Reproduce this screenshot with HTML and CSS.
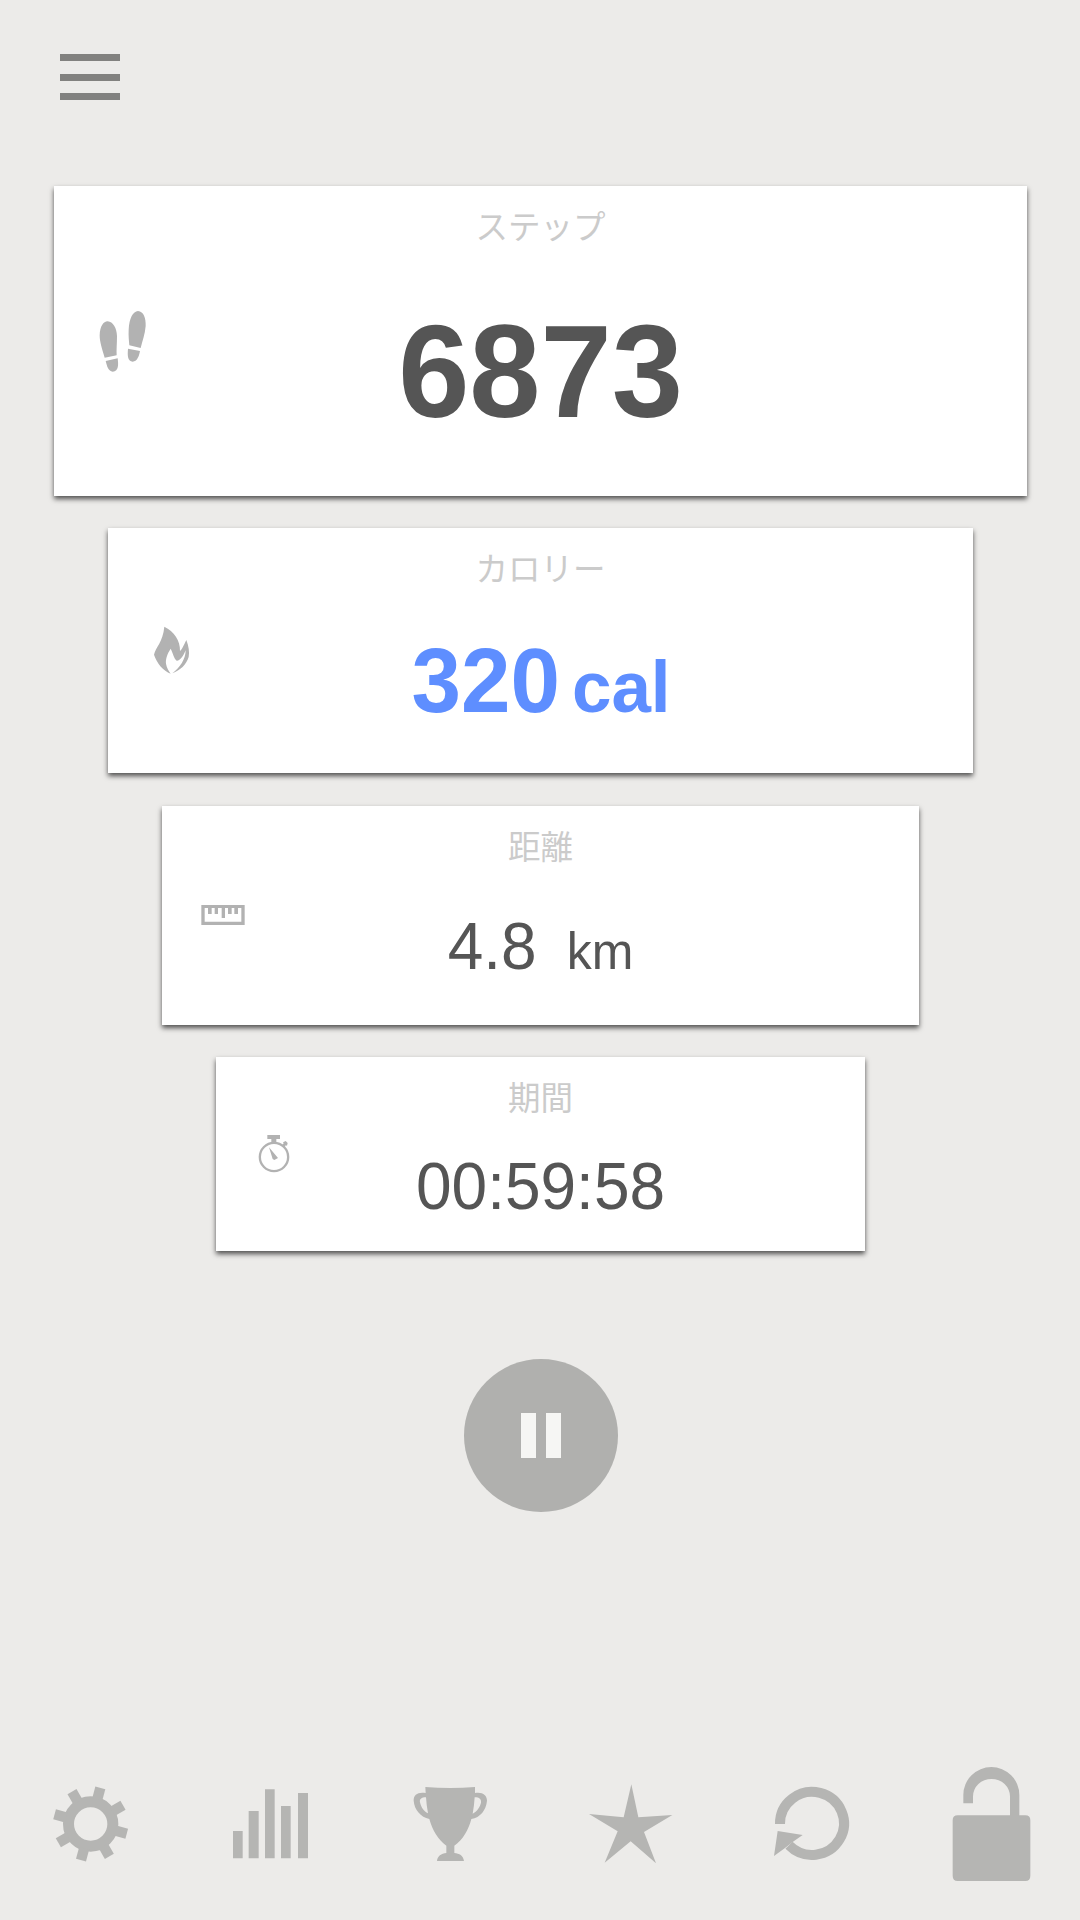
FILE: index.html
```html
<!DOCTYPE html>
<html lang="ja">
<head>
<meta charset="utf-8">
<title>ステップ</title>
<link rel="stylesheet" href="styles.css">
</head>
<body>
<div class="app">
  <header class="topbar">
    <div class="menu"><span class="menu-line"></span><span class="menu-line"></span><span class="menu-line"></span></div>
  </header>
  <main class="cards">
    <section class="card card-steps">
      <svg class="icon" width="60" height="70" viewBox="160 50 180 210">
        <path d="M195 202C187 175 180 155 180 135C181 108 191 93 204 93C220 94 231 113 232 137C232 160 230 178 231 195Z"/>
        <path d="M198 212L234 204C236 222 238 243 219 244C206 243 202 228 198 212Z"/>
        <path d="M269 165C268 150 266 138 267 118C269 83 280 63 295 62C312 63 319 84 318 107C316 132 308 152 303 173Z"/>
        <path d="M265 175L301 182C298 199 292 213 279 214C264 212 263 197 265 175Z"/>
      </svg>
      <h2 class="label">ステップ</h2>
      <p class="value"><span>6873</span></p>
    </section>
    <section class="card card-calories">
      <svg class="icon" width="50" height="60" viewBox="60 60 150 180">
        <path d="M103 80C132 94 151 122 150 153C157 148 162 134 169 120C176 139 179 156 176 171C169 194 151 211 127 220C150 203 167 177 167 151C160 169 150 183 140 182C132 176 129 160 122 146C112 161 106 178 108 191C110 204 117 214 122 221C100 213 80 189 72 164C76 143 99 126 103 80Z"/>
      </svg>
      <h2 class="label">カロリー</h2>
      <p class="value"><span>320</span><span class="unit">cal</span></p>
    </section>
    <section class="card card-distance">
      <svg class="icon" width="50" height="30" viewBox="144 60 150 90">
        <path fill-rule="evenodd" d="M154 75H284V135H154ZM164 84V125H274V84H264V102H253V84H245V102H234V84H225V114H215V84H204V102H194V84H185V102H174V84Z"/>
      </svg>
      <h2 class="label">距離</h2>
      <p class="value"><span>4.8</span><span class="unit">km</span></p>
    </section>
    <section class="card card-time">
      <svg class="icon" width="40" height="50" viewBox="162 90 120 150">
        <circle class="ring" cx="222" cy="171" r="42.5"/>
        <path d="M202 105H240V117H229V127H214V117H202ZM207 142L234 174L223 180L218 177ZM245 137L251 130L249 127L257 123L263 129L261 137L257 136L253 144Z"/>
      </svg>
      <h2 class="label">期間</h2>
      <p class="value"><span>00:59:58</span></p>
    </section>
  </main>
  <div class="controls">
    <button class="pause" aria-label="一時停止"><span class="pause-bar"></span><span class="pause-bar"></span></button>
  </div>
  <nav class="tabs">
    <svg class="tab" viewBox="-90 0 540 450">
      <circle class="gear-ring" cx="182" cy="222" r="66.5"/>
      <g transform="translate(182 222)">
        <rect x="-15.5" y="-112" width="31" height="36" transform="rotate(15)"/>
        <rect x="-15.5" y="-112" width="31" height="36" transform="rotate(60)"/>
        <rect x="-15.5" y="-112" width="31" height="36" transform="rotate(105)"/>
        <rect x="-15.5" y="-112" width="31" height="36" transform="rotate(150)"/>
        <rect x="-15.5" y="-112" width="31" height="36" transform="rotate(195)"/>
        <rect x="-15.5" y="-112" width="31" height="36" transform="rotate(240)"/>
        <rect x="-15.5" y="-112" width="31" height="36" transform="rotate(285)"/>
        <rect x="-15.5" y="-112" width="31" height="36" transform="rotate(330)"/>
      </g>
    </svg>
    <svg class="tab" viewBox="450 0 540 450">
      <path d="M609 243H638V325H609ZM656 183H686V325H656ZM705 118H734V325H705ZM753 168H782V325H753ZM804 129H834V325H804Z"/>
    </svg>
    <svg class="tab" viewBox="-60 0 540 450">
      <path fill-rule="evenodd" d="M136 111Q211 117 285 111L285 129C307 125 321 135 321 152C318 181 301 202 274 207C266 238 249 270 223 287V309C238 310 250 317 252 333H171C172 319 184 310 199 309V287C174 269 157 240 148 207C122 201 103 179 101 152C100 133 115 125 137 129ZM138 142C124 142 118 148 120 157C123 172 132 184 144 190C141 174 139 158 138 142ZM284 142C283 158 281 175 278 191C291 184 300 171 303 158C304 148 299 142 284 142Z"/>
    </svg>
    <svg class="tab" viewBox="480 0 540 450">
      <path d="M754 103L775 202L877 195L792 246L828 340L752 274L674 338L713 244L627 192L731 202Z"/>
    </svg>
    <svg class="tab" viewBox="-60 0 540 450">
      <path class="reload-arc" d="M120 222A96 94.500 0 1 1 147 286"/>
      <path d="M113 243L188 255L158 276L134 295L102 318Z"/>
    </svg>
    <svg class="tab" viewBox="480 0 540 450">
      <path d="M670 160V135A84 84 0 0 1 838 135V196H856Q871 196 871 211V377Q871 393 856 393H653Q638 393 638 377V211Q638 196 653 196H810V139A55.500 52 0 0 0 699 139V160Z"/>
    </svg>
  </nav>
</div>
</body>
</html>
```
FILE: styles.css
```css
* {
  box-sizing: border-box;
}

body {
  margin: 0;
  background: #ecebe9;
  font-family: "Liberation Sans", "Noto Sans CJK JP", sans-serif;
  color: #555;
}

.app {
  display: flex;
  flex-direction: column;
  width: 1080px;
  height: 1920px;
}

.topbar {
  height: 186px;
  padding: 54px 60px 0;
}

.menu {
  display: flex;
  flex-direction: column;
  justify-content: space-between;
  width: 60px;
  height: 46px;
}

.menu-line {
  height: 7px;
  background: #81817f;
}

.cards {
  display: flex;
  flex-direction: column;
  align-items: center;
  gap: 32px;
}

.card {
  display: grid;
  grid-template-rows: 80px 1fr;
  justify-items: center;
  background: #fff;
  box-shadow: 0 3px 5px rgba(0, 0, 0, 0.66);
}

.icon {
  grid-area: 1 / 1 / 3 / 2;
  justify-self: start;
  fill: #b2b2b2;
}

.label {
  grid-area: 1 / 1;
  margin: 0;
  padding: 21px 0 0 1px;
  font-family: "Noto Sans CJK JP", sans-serif;
  font-size: 32.500px;
  font-weight: 400;
  line-height: 36px;
  color: #cbcbcb;
}

.value {
  grid-area: 2 / 1;
  display: flex;
  align-items: baseline;
  margin: 0;
  padding-left: 1px;
  line-height: 1;
  transform: scaleY(1.03);
}

.card-steps {
  width: 973px;
  height: 310px;
}

.card-steps .icon {
  margin: 121px 0 0 39px;
}

.card-steps .value {
  margin-top: 43px;
  font-size: 128px;
  font-weight: bold;
}

.card-calories {
  width: 865px;
  height: 245px;
}

.card-calories .icon {
  margin: 92px 0 0 42px;
}

.card-calories .value {
  gap: 12px;
  margin-top: 29px;
  padding-left: 2px;
  font-size: 89px;
  font-weight: bold;
  color: #5e8eff;
}

.card-calories .unit {
  font-size: 71px;
}

.card-distance {
  width: 757px;
  height: 219px;
  margin-top: 1px;
}

.card-distance .icon {
  margin: 94px 0 0 36px;
}

.card-distance .value {
  gap: 30px;
  margin-top: 29px;
  font-size: 64px;
}

.card-distance .unit {
  font-size: 50px;
}

.card-time {
  width: 649px;
  height: 194px;
}

.card-time .icon {
  margin: 73px 0 0 38px;
}

.card-time .value {
  margin-top: 18px;
  font-size: 64px;
}

.controls {
  display: flex;
  justify-content: center;
  margin-top: 108px;
  padding-left: 2px;
}

.pause {
  display: flex;
  align-items: center;
  justify-content: center;
  gap: 10px;
  width: 154px;
  height: 153px;
  padding: 0;
  border: 0;
  border-radius: 50%;
  background: #b0b0ae;
}

.pause-bar {
  width: 15px;
  height: 45px;
  background: #f6f6f4;
}

.tabs {
  display: grid;
  grid-template-columns: repeat(6, 180px);
  margin-top: auto;
  padding-bottom: 20px;
}

.tab {
  width: 180px;
  height: 150px;
  fill: #b5b5b3;
}

.ring,
.gear-ring,
.reload-arc {
  fill: none;
  stroke: #b5b5b3;
}

.ring {
  stroke: #b2b2b2;
  stroke-width: 7;
}

.gear-ring {
  stroke-width: 33;
}

.reload-arc {
  stroke-width: 30;
}
```
